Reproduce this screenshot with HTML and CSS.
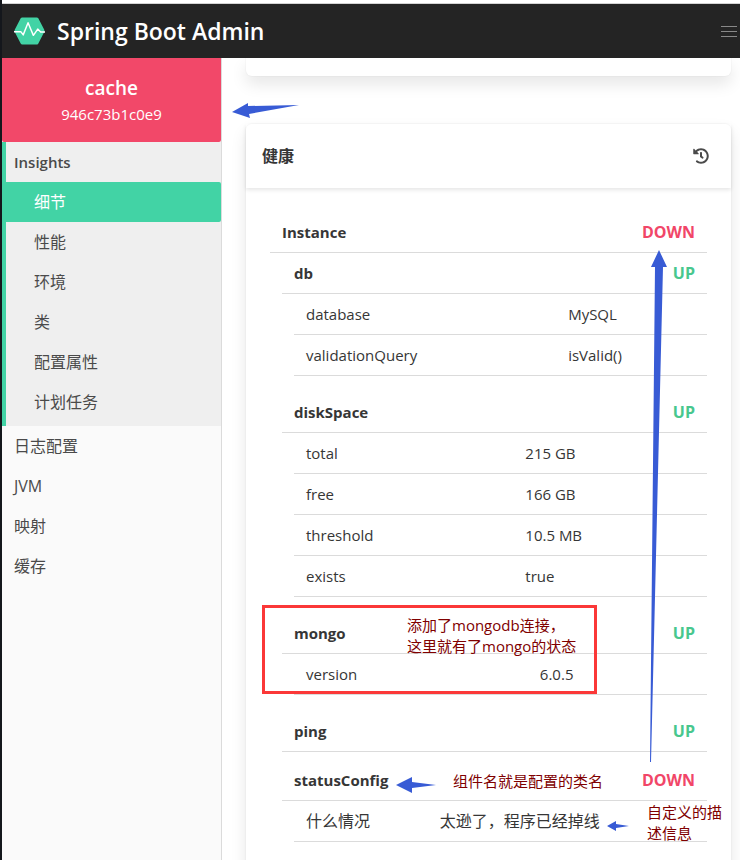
FILE: index.html
```html
<!DOCTYPE html>
<html lang="zh-CN">
<head>
<meta charset="utf-8">
<meta name="viewport" content="width=device-width, initial-scale=1">
<title>Spring Boot Admin</title>
<link rel="stylesheet" href="styles.css">
</head>
<body>
<div class="app">
  <header class="navbar">
    <a class="brand" href="#">
      <svg class="brand-logo" viewBox="0 0 32 28" aria-hidden="true">
        <path d="M8.500 0h15c.8 0 1.200.3 1.600.9l6 11.500c.5 1 .5 2 0 3l-6 11.500c-.4.700-.8 1.100-1.600 1.100h-15c-.8 0-1.200-.4-1.600-1.100l-6-11.500c-.5-1-.5-2 0-3l6-11.500c.4-.6.8-.9 1.600-.9z" fill="#42d3a5"/>
        <path d="M0 14.700H7L9.500 18L14.500 5.500L20 18.500L24.500 12L27.500 15H32" fill="none" stroke="#fff" stroke-width="1.500" stroke-linejoin="round"/>
      </svg>
      <span>Spring Boot Admin</span>
    </a>
    <button class="burger" type="button" aria-label="菜单"><span></span><span></span><span></span></button>
  </header>
  <div class="body">
    <aside class="sidebar">
      <a class="instance" href="#"><strong>cache</strong><span>946c73b1c0e9</span></a>
      <nav>
        <div class="group">
          <a class="link group-title" href="#">Insights</a>
          <a class="link sub active" href="#">细节</a>
          <a class="link sub" href="#">性能</a>
          <a class="link sub" href="#">环境</a>
          <a class="link sub" href="#">类</a>
          <a class="link sub" href="#">配置属性</a>
          <a class="link sub" href="#">计划任务</a>
        </div>
        <a class="link" href="#">日志配置</a>
        <a class="link" href="#">JVM</a>
        <a class="link" href="#">映射</a>
        <a class="link" href="#">缓存</a>
      </nav>
    </aside>
    <main class="content">
      <section class="card card-previous"></section>
      <section class="card card-health">
        <header class="card-header">
          <h2>健康</h2>
          <button class="history" type="button" aria-label="历史">
            <svg viewBox="0 0 512 512" aria-hidden="true"><path fill="currentColor" d="M504 255.531c.253 136.640-111.180 248.372-247.820 248.468-59.015.042-113.223-20.530-155.822-54.911-11.077-8.940-11.905-25.541-1.839-35.607l11.267-11.267c8.609-8.609 22.353-9.551 31.891-1.984C173.062 425.135 212.781 440 256 440c101.705 0 184-82.311 184-184 0-101.705-82.311-184-184-184-48.814 0-93.149 18.969-126.068 49.932l50.754 50.754c10.080 10.080 2.941 27.314-11.313 27.314H24c-8.837 0-16-7.163-16-16V38.627c0-14.254 17.234-21.393 27.314-11.314l49.372 49.372C129.209 34.136 189.552 8 256 8c136.810 0 247.747 110.780 248 247.531zm-180.912 78.784l9.823-12.630c8.138-10.463 6.253-25.542-4.210-33.679L288 256.349V152c0-13.255-10.745-24-24-24h-16c-13.255 0-24 10.745-24 24v135.651l65.409 50.874c10.463 8.137 25.541 6.253 33.679-4.210z"/></svg>
          </button>
        </header>
        <div class="card-content">
          <div class="row"><span>Instance</span><span class="status down">DOWN</span></div>
          <div class="component">
            <div class="row"><span>db</span><span class="status up">UP</span></div>
            <table class="details">
              <tr><th scope="row">database</th><td>MySQL</td></tr>
              <tr><th scope="row">validationQuery</th><td>isValid()</td></tr>
            </table>
          </div>
          <div class="component">
            <div class="row"><span>diskSpace</span><span class="status up">UP</span></div>
            <table class="details">
              <tr><th scope="row">total</th><td>215 GB</td></tr>
              <tr><th scope="row">free</th><td>166 GB</td></tr>
              <tr><th scope="row">threshold</th><td>10.5 MB</td></tr>
              <tr><th scope="row">exists</th><td>true</td></tr>
            </table>
          </div>
          <div class="component">
            <div class="row"><span>mongo</span><span class="status up">UP</span></div>
            <table class="details">
              <tr><th scope="row">version</th><td>6.0.5</td></tr>
            </table>
          </div>
          <div class="component">
            <div class="row"><span>ping</span><span class="status up">UP</span></div>
          </div>
          <div class="component">
            <div class="row"><span>statusConfig</span><span class="status down">DOWN</span></div>
            <table class="details details-cjk">
              <tr><th scope="row">什么情况</th><td>太逊了，程序已经掉线</td></tr>
            </table>
          </div>
        </div>
      </section>
    </main>
  </div>
  <div class="annotations">
    <svg class="arrows" viewBox="0 0 740 860" width="740" height="860" aria-hidden="true">
      <g fill="#385bd5">
        <path d="M232 112l16-9v3l51-1-50 9 1 4z"/>
        <path d="M659 250l8 17h-4l-12 495h-1l5-495h-4z"/>
        <path d="M396 785l16-8v5l24 3-24 3v5z"/>
        <path d="M607 826l9-5v3l13 2-13 2v3z"/>
      </g>
    </svg>
    <div class="frame"></div>
    <p class="note note-mongo">添加了mongodb连接，<br>这里就有了mongo的状态</p>
    <p class="note note-class">组件名就是配置的类名</p>
    <p class="note note-custom">自定义的描<br>述信息</p>
  </div>
</div>
</body>
</html>
```

FILE: styles.css
```css
* { box-sizing: border-box; }

body {
  margin: 0;
  background: #fff;
  color: #4a4a4a;
  font: 15px/24px "Open Sans", "Noto Sans CJK SC", sans-serif;
}

a { color: inherit; text-decoration: none; }
button { border: 0; padding: 0; background: none; color: inherit; }

.app {
  position: relative;
  display: flex;
  flex-direction: column;
  height: 100vh;
  overflow: hidden;
  padding-top: 3px;
  border-left: 2px solid #14171c;
}

.navbar {
  display: flex;
  flex: none;
  align-items: center;
  justify-content: space-between;
  height: 55px;
  padding: 0 3px 0 12px;
  border-top: 1px solid #d4d4d4;
  background: #242424;
  color: #fff;
}

.brand {
  display: flex;
  align-items: center;
  gap: 12px;
  font-size: 23px;
  font-weight: 600;
}

.brand-logo { width: 31px; height: 28px; }
.burger { display: grid; gap: 4px; width: 16px; }
.burger span { height: 1px; background: #888; }

.body { display: flex; flex: 1; min-height: 0; }

.sidebar {
  flex: none;
  width: 220px;
  border-right: 1px solid #dbdbdb;
  background: #fafafa;
}

.instance {
  display: flex;
  flex-direction: column;
  align-items: center;
  justify-content: center;
  height: 84px;
  border-radius: 0 0 2px 2px;
  background: #f24869;
  color: #fff;
}

.instance strong { font-size: 19px; line-height: 28px; font-weight: 600; }

.group {
  padding-bottom: 4px;
  border-left: 4px solid #42d3a5;
  background: #efefef;
}

.link {
  display: block;
  padding: 8px 12px;
  font-size: 16px;
}

.group .link { padding-left: 8px; }
.group .group-title { font-size: 15px; font-weight: 600; }
.group .sub { padding-left: 28px; }

.active {
  border-radius: 0 2px 2px 0;
  background: #42d3a5;
  color: #fff;
}

.content {
  display: flex;
  flex: 1;
  flex-direction: column;
  gap: 48px;
  min-width: 0;
  overflow: hidden;
  padding: 0 9px 0 24px;
}

.card {
  background: #fff;
  box-shadow: 0 8px 16px rgba(10, 10, 10, .1), 0 0 0 1px rgba(10, 10, 10, .02);
}

.card-previous { flex: none; height: 18px; border-radius: 0 0 6px 6px; }
.card-health { flex: 1 0 auto; border-radius: 6px 6px 0 0; }

.card-header {
  display: flex;
  align-items: center;
  justify-content: space-between;
  height: 64px;
  padding: 0 22px 0 16px;
  box-shadow: 0 2px 4px rgba(10, 10, 10, .1);
}

.card-header h2 { margin: 0; color: #363636; font-size: 16px; font-weight: 600; }
.history, .history svg { display: block; width: 16px; height: 16px; }
.card-content { padding: 24px; }

.row {
  display: flex;
  justify-content: space-between;
  padding: 8px 12px;
  border-bottom: 1px solid #dbdbdb;
  color: #363636;
  font-weight: 700;
}

.status { font-size: 16px; }
.up { color: #48c78e; }
.down { color: #f14668; }

.component { margin: 0 0 8px 12px; }

.details {
  width: calc(100% - 12px);
  margin: 0 0 16px 12px;
  border-collapse: collapse;
  color: #363636;
}

.details-cjk { font-size: 16px; }

.details th, .details td {
  padding: 8px 12px;
  border-bottom: 1px solid #dbdbdb;
  font-weight: 400;
  text-align: left;
  white-space: nowrap;
}

.annotations { position: absolute; top: 0; left: -2px; }
.arrows { display: block; }

.frame {
  position: absolute;
  top: 605px;
  left: 262px;
  width: 335px;
  height: 89px;
  border: 3px solid #fb3838;
}

.note {
  position: absolute;
  margin: 0;
  color: #800000;
  font-size: 15px;
  line-height: 21px;
  white-space: nowrap;
}

.note-mongo { top: 615px; left: 407px; }
.note-class { top: 771px; left: 453px; }
.note-custom { top: 802px; left: 647px; }
```
